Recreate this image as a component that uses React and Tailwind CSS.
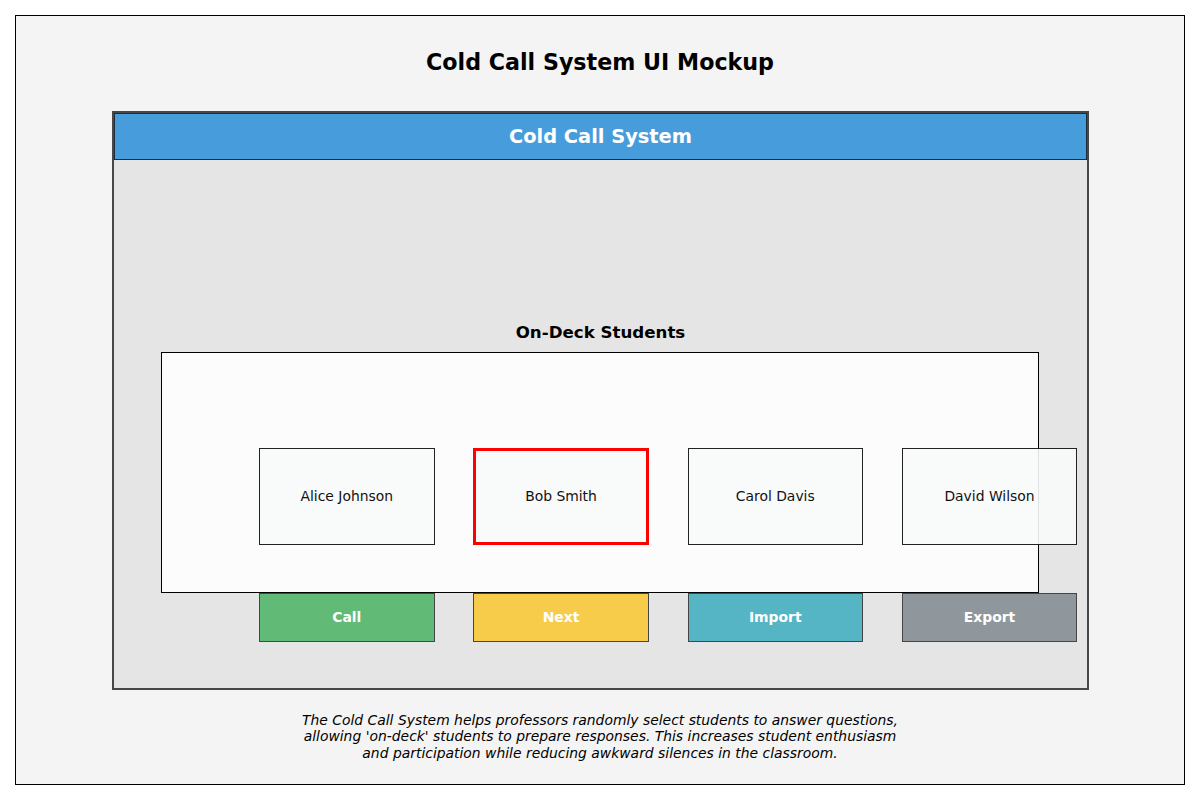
export default function App() {
  const students = ["Alice Johnson", "Bob Smith", "Carol Davis", "David Wilson"];
  const buttons = [
    { label: "Call", cls: "bg-[#61ba75]" },
    { label: "Next", cls: "bg-[#f7cc4a]" },
    { label: "Import", cls: "bg-[#55b5c5]" },
    { label: "Export", cls: "bg-[#90979c]" },
  ];
  return (
    <div
      className="w-[1200px] h-[800px] bg-white p-[15px]"
      style={{ fontFamily: '"DejaVu Sans", Verdana, sans-serif' }}
    >
      <div className="h-full border border-black bg-[#f4f4f4] flex flex-col items-center">
        <div className="mt-[33px] text-[22.2px] leading-[26px] font-bold text-black">
          Cold Call System UI Mockup
        </div>
        <div className="mt-[36px] ml-[1px] w-[977px] h-[579px] border-2 border-[#474747] bg-[#e5e5e5] flex flex-col items-center">
          <div className="w-full h-[47px] bg-[#479ddb] border border-[#1d2d3a] flex items-center justify-center">
            <span className="text-white font-bold text-[19.4px] leading-[24px]">Cold Call System</span>
          </div>
          <div className="mt-[163px] text-[16.67px] leading-[20px] font-bold text-black">
            On-Deck Students
          </div>
          <div className="mt-[9px] mr-[1px] w-[878px]">
            <div className="h-[241px] border border-black bg-[#fcfcfc] pt-[95px] pl-[97px]">
              <div className="grid grid-cols-[repeat(4,175.5px)] gap-x-[38.75px]">
                {students.map((s, i) => (
                  <div
                    key={s}
                    className={
                      "h-[97px] flex items-center justify-center text-[13.9px] text-[#111] bg-[#f8f9fa]/90 " +
                      (i === 1 ? "border-[3px] border-[#ff0000]" : "border border-[#222]")
                    }
                  >
                    {s}
                  </div>
                ))}
              </div>
            </div>
            <div className="pl-[98px] grid grid-cols-[repeat(4,175.5px)] gap-x-[38.75px]">
              {buttons.map((b) => (
                <div
                  key={b.label}
                  className={
                    "h-[49px] border border-[#454545] flex items-center justify-center text-white font-bold text-[13.9px] " +
                    b.cls
                  }
                >
                  {b.label}
                </div>
              ))}
            </div>
          </div>
        </div>
        <div className="mt-[22px] text-center italic text-[13.9px] leading-[16.3px] text-black">
          The Cold Call System helps professors randomly select students to answer questions,
          <br />
          allowing 'on-deck' students to prepare responses. This increases student enthusiasm
          <br />
          and participation while reducing awkward silences in the classroom.
        </div>
      </div>
    </div>
  );
}
